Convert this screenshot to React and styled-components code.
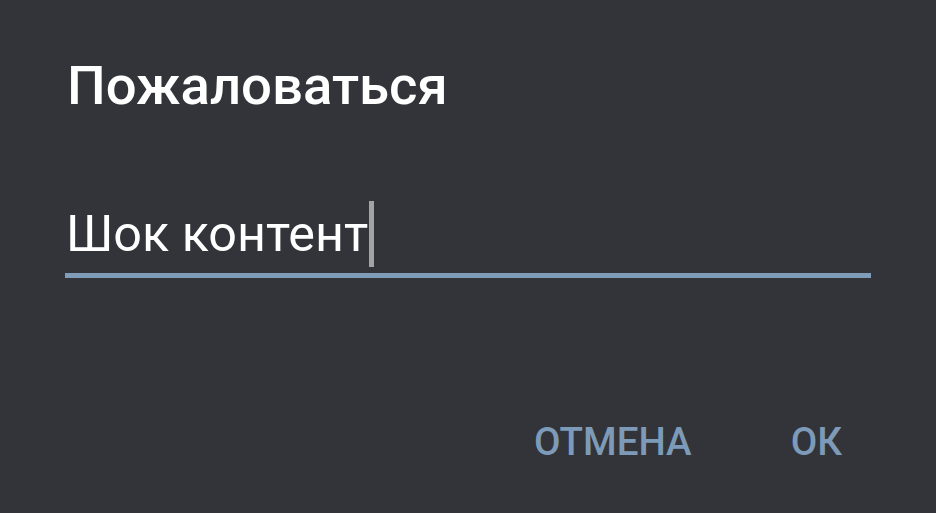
import React from "react";
import styled, { createGlobalStyle } from "styled-components";

const GlobalStyle = createGlobalStyle`
  html, body {
    margin: 0;
    padding: 0;
    background: #323439;
  }
`;

export default function App() {
  return (
    <>
      <GlobalStyle />
      <Dialog>
        <Title>Пожаловаться</Title>
        <Field>
          <InputText>
            Шок контент
            <Caret />
          </InputText>
        </Field>
        <Actions>
          <ActionButton>ОТМЕНА</ActionButton>
          <ActionButton>ОК</ActionButton>
        </Actions>
      </Dialog>
    </>
  );
}

const Dialog = styled.div`
  width: 936px;
  height: 513px;
  box-sizing: border-box;
  background: #323439;
  padding: 50px 65px 0 65px;
  display: flex;
  flex-direction: column;
  font-family: Roboto, "Liberation Sans", sans-serif;
`;

const Title = styled.h1`
  margin: 0;
  font-size: 54.5px;
  font-weight: 500;
  color: #ffffff;
  line-height: 70px;
  padding-left: 2px;
`;

const Field = styled.div`
  margin-top: 78px;
  border-bottom: 5px solid #7f9cb8;
  width: 806px;
  height: 80px;
  box-sizing: border-box;
  display: flex;
  align-items: flex-end;
`;

const InputText = styled.div`
  font-size: 50.3px;
  font-weight: 400;
  color: #ffffff;
  line-height: 60px;
  padding-left: 1px;
  padding-bottom: 6px;
  display: flex;
  align-items: center;
`;

const Caret = styled.span`
  display: inline-block;
  width: 5px;
  height: 66px;
  background: #a3a3a3;
  margin-left: 1px;
`;

const Actions = styled.div`
  margin-top: 144px;
  display: flex;
  justify-content: flex-end;
  gap: 99px;
  padding-right: 29px;
`;

const ActionButton = styled.button`
  background: none;
  border: none;
  padding: 0;
  font-family: Roboto, "Liberation Sans", sans-serif;
  font-size: 38.5px;
  font-weight: 500;
  color: #7d9bb8;
  cursor: pointer;
  line-height: 40px;
`;
